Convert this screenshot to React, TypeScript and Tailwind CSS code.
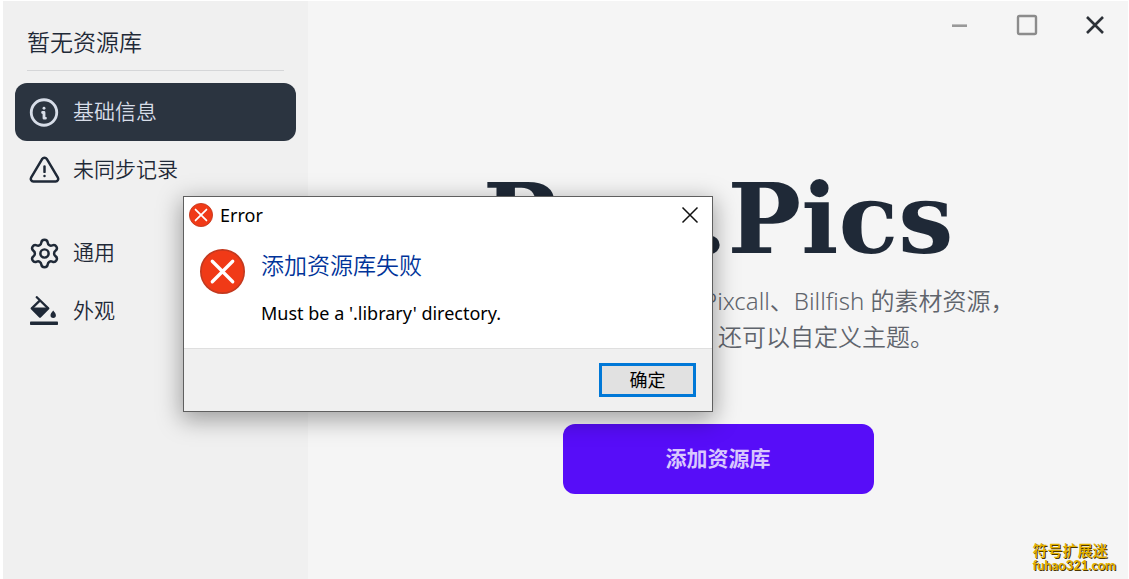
import type { ReactNode } from "react";
import { Settings } from "lucide-react";
import { TbAlertTriangle, TbInfoCircle } from "react-icons/tb";

type NavItemProps = { icon: ReactNode; label: string; active?: boolean };

function NavItem({ icon, label, active }: NavItemProps) {
  return (
    <a
      href="#"
      aria-current={active ? "page" : undefined}
      className={
        "flex h-[58px] items-center gap-3 rounded-xl px-3 text-[21px] font-[350] " +
        (active ? "bg-[#2b3440] text-[#d7dde8]" : "text-[#1f2937]")
      }
    >
      <span className="flex size-[34px] items-center justify-center">{icon}</span>
      {label}
    </a>
  );
}

function PaintBucketIcon() {
  return (
    <svg viewBox="0 0 30 30" className="size-[30px]" aria-hidden="true">
      <path
        d="M7.8 1.2L19.2 12.4L11 20.6L2.8 12.4L11 4.4"
        fill="none"
        stroke="currentColor"
        strokeWidth="2.3"
        strokeLinejoin="round"
        strokeLinecap="round"
      />
      <path d="M2.2 11.6H19.8L11 21.4Z" fill="currentColor" />
      <path d="M24.2 14.6c1.7 2 2.7 3.3 2.7 4.7a2.7 2.7 0 0 1-5.4 0c0-1.4 1-2.7 2.7-4.7z" fill="currentColor" />
      <rect x="1" y="25.4" width="28" height="3.6" rx="0.8" fill="currentColor" />
    </svg>
  );
}

function Sidebar() {
  return (
    <aside className="w-[305px] shrink-0 bg-[#f0f0f0] px-3 pt-5">
      <h2 className="mx-3 border-b border-[#d5d6d8] pb-[7px] text-[23px] leading-[42px] font-[350] text-[#1f2937]">
        暂无资源库
      </h2>
      <nav className="mt-3">
        <NavItem active icon={<TbInfoCircle size={35} />} label="基础信息" />
        <NavItem icon={<TbAlertTriangle size={33} strokeWidth={1.8} />} label="未同步记录" />
        <div className="mt-[25px]">
          <NavItem icon={<Settings size={33} strokeWidth={1.8} />} label="通用" />
          <NavItem icon={<PaintBucketIcon />} label="外观" />
        </div>
      </nav>
    </aside>
  );
}

function WindowControls() {
  return (
    <div className="flex h-12 items-center justify-end gap-9 pr-[17px]">
      <button aria-label="Minimize" className="flex size-8 items-center justify-center">
        <svg viewBox="0 0 24 24" className="size-6" stroke="#999" strokeWidth="2.6" fill="none">
          <path d="M5 12.7h15" />
        </svg>
      </button>
      <button aria-label="Maximize" className="flex size-8 items-center justify-center">
        <svg viewBox="0 0 24 24" className="size-6" stroke="#8c8c8c" strokeWidth="2.4" fill="none">
          <rect x="3" y="3" width="18" height="18" rx="1.5" />
        </svg>
      </button>
      <button aria-label="Close window" className="flex size-8 items-center justify-center">
        <svg viewBox="0 0 24 24" className="size-6" stroke="#2d3238" strokeWidth="2.6" fill="none">
          <path d="M4 4l16 16M20 4L4 20" />
        </svg>
      </button>
    </div>
  );
}

function ErrorIcon({ className }: { className: string }) {
  return (
    <svg viewBox="0 0 44 44" className={className} aria-hidden="true">
      <circle cx="22" cy="22" r="21.2" fill="#f03a17" stroke="#c3391f" strokeWidth="1.6" />
      <path d="M12 12l20 20M32 12L12 32" stroke="#fff" strokeWidth="3.2" strokeLinecap="round" />
    </svg>
  );
}

function ErrorDialog() {
  return (
    <div
      role="alertdialog"
      aria-labelledby="error-heading"
      aria-describedby="error-text"
      className="absolute top-[196px] left-[183px] w-[530px] border border-[#5f5f5f] bg-white text-black shadow-[0_6px_22px_2px_rgba(0,0,0,0.34)]"
    >
      <div className="flex h-9 items-center gap-[7px] pr-[11px] pl-[5px]">
        <ErrorIcon className="size-6" />
        <span className="grow text-lg">Error</span>
        <button aria-label="Close dialog" className="p-0.5">
          <svg viewBox="0 0 18 18" className="size-[18px]" stroke="#111" strokeWidth="1.5">
            <path d="M1.5 1.5l15 15M16.5 1.5l-15 15" />
          </svg>
        </button>
      </div>
      <div className="flex gap-4 px-4 pt-4 pb-[19px]">
        <ErrorIcon className="size-[45px] shrink-0" />
        <div>
          <h3 id="error-heading" className="text-[23px] leading-8 font-[350] text-[#003399]">
            添加资源库失败
          </h3>
          <p id="error-text" className="mt-4 text-lg leading-8">
            Must be a '.library' directory.
          </p>
        </div>
      </div>
      <div className="flex justify-end border-t border-[#dfdfdf] bg-[#f0f0f0] px-4 py-[14px]">
        <button className="h-[34px] w-[97px] border-3 border-[#0078d7] bg-[#e1e1e1] text-lg leading-none">
          确定
        </button>
      </div>
    </div>
  );
}

export default function App() {
  return (
    <div className="relative flex min-h-screen bg-white pt-px pr-px pl-[3px] font-['Noto_Sans','Noto_Sans_CJK_SC',sans-serif]">
      <Sidebar />
      <main className="flex grow flex-col bg-[#f5f5f5]">
        <WindowControls />
        <div className="flex grow flex-col items-center pt-[108px]">
          <h1 className="font-['DejaVu_Serif',serif] text-[98px] leading-[124px] font-bold text-[#1f2937]">
            Rao.Pics
          </h1>
          <p className="mt-0.5 text-center text-2xl leading-9 font-[350] text-[#5f646c]">
            可在局域网内访问 Eagle、Pixcall、Billfish 的素材资源，
            <br />
            支持多种主题切换，还可以自定义主题。
          </p>
          <button className="mt-[69px] h-[70px] w-[311px] rounded-xl bg-[#570df8] text-[21px] font-bold text-[#d9c7fe]">
            添加资源库
          </button>
        </div>
        <footer className="self-end pr-3 pb-[7px] text-[#e3b100] [text-shadow:1px_1px_0_#4a3600]">
          <div className="text-[15px] leading-4 font-medium">符号扩展迷</div>
          <div className="font-['Lato',sans-serif] text-[13px] leading-[14px] font-bold">fuhao321.com</div>
        </footer>
      </main>
      <ErrorDialog />
    </div>
  );
}
